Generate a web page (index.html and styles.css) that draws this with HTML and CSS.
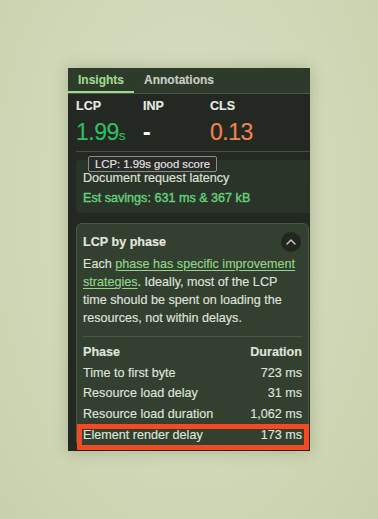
FILE: index.html
```html
<!DOCTYPE html>
<html>
<head>
<meta charset="utf-8">
<link rel="stylesheet" href="styles.css">
</head>
<body>
<div class="panel">
  <div class="tabs">
    <div class="tab active">Insights</div>
    <div class="tab">Annotations</div>
  </div>
  <div class="content">
    <div class="metrics">
      <div class="metric">
        <div class="mlabel">LCP</div>
        <div class="mvalue good">1.99<span class="unit">s</span></div>
      </div>
      <div class="metric">
        <div class="mlabel">INP</div>
        <div class="mvalue plain">-</div>
      </div>
      <div class="metric">
        <div class="mlabel">CLS</div>
        <div class="mvalue warn">0.13</div>
      </div>
    </div>
    <div class="sep"></div>
    <div class="card1">
      <div class="c1title">Document request latency</div>
      <div class="c1sav">Est savings: 631 ms &amp; 367 kB</div>
    </div>
    <div class="card2">
      <div class="c2head">
        <div class="c2title">LCP by phase</div>
        <div class="collapse"><svg width="10" height="6" viewBox="0 0 10 6"><path d="M1 5 L5 1 L9 5" fill="none" stroke="#c9cec4" stroke-width="1.4" stroke-linecap="round" stroke-linejoin="round"/></svg></div>
      </div>
      <p class="desc">Each <a class="lnk">phase has specific improvement strategies</a>. Ideally, most of the LCP time should be spent on loading the resources, not within delays.</p>
      <div class="sep2"></div>
      <div class="row head"><span>Phase</span><span>Duration</span></div>
      <div class="row"><span>Time to first byte</span><span>723 ms</span></div>
      <div class="row"><span>Resource load delay</span><span>31 ms</span></div>
      <div class="row"><span>Resource load duration</span><span>1,062 ms</span></div>
      <div class="row hl"><span>Element render delay</span><span>173 ms</span></div>
    </div>
    <div class="tooltip">LCP: 1.99s good score</div>
  </div>
</div>
</body>
</html>
```
FILE: styles.css
```css
html, body {
  margin: 0;
  padding: 0;
}
body {
  width: 378px;
  height: 519px;
  overflow: hidden;
  background: radial-gradient(ellipse at 50% 40%, #d7ddc1 0%, #d1d8b8 55%, #c8d1ac 100%);
  font-family: "Liberation Sans", Arial, sans-serif;
  color: #dcdfd6;
}
.panel {
  margin: 68px 0 0 68px;
  width: 242px;
  height: 383px;
  background: #242823;
  overflow: hidden;
  position: relative;
  box-shadow: 0 0 14px rgba(60, 70, 40, 0.25);
  -webkit-text-stroke: 0.15px currentColor;
}
.tabs {
  display: flex;
  height: 25px;
  background: #2e3b2b;
  border-bottom: 1px solid #4a5746;
}
.tab {
  padding: 0 10px;
  font-size: 12px;
  font-weight: 700;
  line-height: 24px;
  height: 23px;
  color: #c9cbc4;
  border-bottom: 2px solid transparent;
}
.tab.active {
  color: #9fd88f;
  border-bottom-color: #9fd88f;
}
.content {
  padding: 0 0 0 8px;
  position: relative;
}
.metrics {
  display: flex;
  padding-top: 5px;
}
.metric {
  width: 67px;
}
.mlabel {
  font-size: 12.5px;
  font-weight: 700;
  line-height: 15px;
  color: #e6e8e2;
}
.mvalue {
  font-size: 23px;
  letter-spacing: -0.5px;
  line-height: 26px;
  height: 26px;
  margin-top: 5px;
}
.unit {
  font-size: 13.5px;
  letter-spacing: 0;
  line-height: 1;
}
.good { color: #2fbf5f; }
.warn { color: #f0844f; }
.plain { color: #ffffff; font-weight: 700; }
.sep {
  height: 1px;
  background: #454d40;
  margin-top: 6px;
}
.card1 {
  margin-top: 8px;
  background: #2b3428;
  border-radius: 4px 0 0 4px;
  padding: 8px 7px 5px;
}
.c1title {
  font-size: 12.6px;
  line-height: 20px;
  color: #dfe2da;
}
.c1sav {
  font-size: 12.6px;
  line-height: 20px;
  color: #62d07b;
  -webkit-text-stroke: 0.4px currentColor;
}
.card2 {
  margin-top: 10px;
  margin-right: 1px;
  background: #333f2f;
  border: 1px solid #485741;
  border-radius: 6px;
  padding: 8px 6px 0 6px;
}
.c2head {
  display: flex;
  justify-content: space-between;
  align-items: center;
  height: 20px;
}
.c2title {
  font-size: 12.6px;
  font-weight: 700;
  color: #e3e6de;
}
.collapse {
  width: 20px;
  height: 20px;
  border-radius: 50%;
  background: #22261f;
  display: flex;
  align-items: center;
  justify-content: center;
  margin-right: 1px;
}
.desc {
  margin: 3px 0 0;
  font-size: 12.6px;
  line-height: 18px;
  color: #dfe2da;
}
.lnk {
  color: #8fd488;
  text-decoration: underline;
  text-underline-offset: 2px;
}
.sep2 {
  height: 1px;
  background: #4a5744;
  margin: 9px 0 5px;
}
.row {
  display: flex;
  justify-content: space-between;
  font-size: 12.6px;
  line-height: 20.7px;
  color: #dfe2da;
  position: relative;
}
.row.head {
  font-weight: 700;
}
.row.hl::after {
  content: "";
  position: absolute;
  left: -6px;
  right: -7px;
  top: -1px;
  bottom: -4px;
  border: 5px solid #f24a24;
  border-radius: 1px;
}
.tooltip {
  position: absolute;
  left: 20px;
  top: 62px;
  box-sizing: border-box;
  padding: 1px 6px 0;
  height: 16px;
  line-height: 13px;
  font-size: 11.3px;
  color: #e4e4e4;
  background: #2a2b29;
  border: 1px solid #8a8c88;
  border-radius: 2px;
  white-space: nowrap;
}
```
